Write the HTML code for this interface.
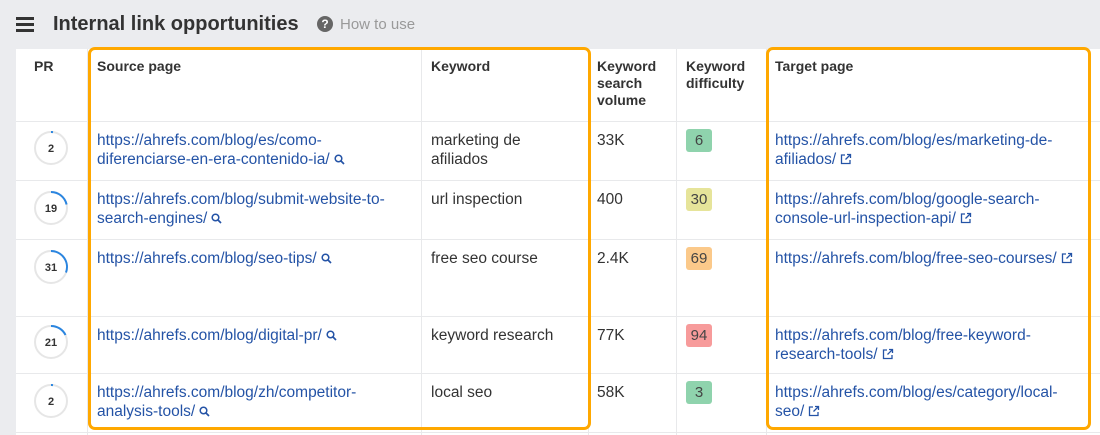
<!DOCTYPE html>
<html><head><meta charset="utf-8"><style>
*{margin:0;padding:0;box-sizing:border-box}
body{width:1100px;height:435px;background:#ebecef;font-family:"Liberation Sans",Arial,sans-serif;position:relative;overflow:hidden;color:#333}
.a{position:absolute}
.t{font-size:15.5px;line-height:19px;white-space:nowrap}
.l{color:#2453a6}
.h{font-size:14px;font-weight:bold;line-height:17px;color:#333}
.vl{position:absolute;width:1px;background:#e8e9eb;top:49px;height:386px}
.hl{position:absolute;height:1px;background:#e8e9eb;left:16px;width:1084px}
.b{position:absolute;left:686px;width:26px;height:23px;border-radius:3px;font-size:15px;line-height:23px;text-align:center;color:#444}
.box{position:absolute;border:3px solid #ffa800;border-radius:7px}
svg.i{vertical-align:-1px;margin-left:4px}
</style></head><body>
<div class="a" style="left:16px;top:17px"><div style="width:18px;height:2.5px;background:#333;margin-bottom:3.5px"></div><div style="width:18px;height:2.5px;background:#333;margin-bottom:3.5px"></div><div style="width:18px;height:2.5px;background:#333"></div></div>
<div class="a" style="left:53px;top:13px;font-size:20px;font-weight:bold;color:#333">Internal link opportunities</div>
<div class="a" style="left:317px;top:16px;width:16px;height:16px;border-radius:50%;background:#666;color:#fff;font-size:12px;font-weight:bold;text-align:center;line-height:16px">?</div>
<div class="a" style="left:340px;top:16px;font-size:15px;color:#999">How to use</div>
<div class="a" style="left:16px;top:49px;width:1084px;height:386px;background:#fff"></div>
<div class="vl" style="left:87px"></div><div class="vl" style="left:421px"></div><div class="vl" style="left:588px"></div><div class="vl" style="left:676px"></div><div class="vl" style="left:766px"></div>
<div class="hl" style="top:121px"></div><div class="hl" style="top:180px"></div><div class="hl" style="top:239px"></div><div class="hl" style="top:316px"></div><div class="hl" style="top:373px"></div><div class="hl" style="top:432px"></div>
<div class="a h" style="left:34px;top:58px">PR</div>
<div class="a h" style="left:97px;top:58px">Source page</div>
<div class="a h" style="left:431px;top:58px">Keyword</div>
<div class="a h" style="left:597px;top:58px">Keyword<br>search<br>volume</div>
<div class="a h" style="left:686px;top:58px">Keyword<br>difficulty</div>
<div class="a h" style="left:775px;top:58px">Target page</div>

<svg class="a" style="left:0;top:0" width="100" height="435">
<g fill="none" stroke-width="2">
<circle cx="51" cy="148" r="16" stroke="#e6e6e6"/><circle cx="51" cy="208" r="16" stroke="#e6e6e6"/><circle cx="51" cy="267" r="16" stroke="#e6e6e6"/><circle cx="51" cy="342" r="16" stroke="#e6e6e6"/><circle cx="51" cy="401" r="16" stroke="#e6e6e6"/>
<path d="M51 132 A16 16 0 0 1 53 132.1" stroke="#2a85e0"/>
<path d="M51 192 A16 16 0 0 1 66.6 204.5" stroke="#2a85e0"/>
<path d="M51 251 A16 16 0 0 1 66 272.5" stroke="#2a85e0"/>
<path d="M51 326 A16 16 0 0 1 65.5 335" stroke="#2a85e0"/>
<path d="M51 385 A16 16 0 0 1 53 385.1" stroke="#2a85e0"/>
</g>
<g font-family="Liberation Sans,Arial" font-size="11" font-weight="bold" fill="#333" text-anchor="middle">
<text x="51" y="152">2</text><text x="51" y="212">19</text><text x="51" y="271">31</text><text x="51" y="346">21</text><text x="51" y="405">2</text></g>
</svg>

<div class="a t l" style="left:97px;top:131px">https://ahrefs.com/blog/es/como-<br>diferenciarse-en-era-contenido-ia/<svg class="i" width="11" height="11" viewBox="0 0 11 11"><circle cx="4.5" cy="4.5" r="3.3" fill="none" stroke="#2453a6" stroke-width="1.5"/><path d="M7 7L10 10" stroke="#2453a6" stroke-width="1.7"/></svg></div>
<div class="a t l" style="left:97px;top:190px">https://ahrefs.com/blog/submit-website-to-<br>search-engines/<svg class="i" width="11" height="11" viewBox="0 0 11 11"><circle cx="4.5" cy="4.5" r="3.3" fill="none" stroke="#2453a6" stroke-width="1.5"/><path d="M7 7L10 10" stroke="#2453a6" stroke-width="1.7"/></svg></div>
<div class="a t l" style="left:97px;top:249px">https://ahrefs.com/blog/seo-tips/<svg class="i" width="11" height="11" viewBox="0 0 11 11"><circle cx="4.5" cy="4.5" r="3.3" fill="none" stroke="#2453a6" stroke-width="1.5"/><path d="M7 7L10 10" stroke="#2453a6" stroke-width="1.7"/></svg></div>
<div class="a t l" style="left:97px;top:326px">https://ahrefs.com/blog/digital-pr/<svg class="i" width="11" height="11" viewBox="0 0 11 11"><circle cx="4.5" cy="4.5" r="3.3" fill="none" stroke="#2453a6" stroke-width="1.5"/><path d="M7 7L10 10" stroke="#2453a6" stroke-width="1.7"/></svg></div>
<div class="a t l" style="left:97px;top:383px">https://ahrefs.com/blog/zh/competitor-<br>analysis-tools/<svg class="i" width="11" height="11" viewBox="0 0 11 11"><circle cx="4.5" cy="4.5" r="3.3" fill="none" stroke="#2453a6" stroke-width="1.5"/><path d="M7 7L10 10" stroke="#2453a6" stroke-width="1.7"/></svg></div>

<div class="a t" style="left:431px;top:131px">marketing de<br>afiliados</div>
<div class="a t" style="left:431px;top:190px">url inspection</div>
<div class="a t" style="left:431px;top:249px">free seo course</div>
<div class="a t" style="left:431px;top:326px">keyword research</div>
<div class="a t" style="left:431px;top:383px">local seo</div>

<div class="a t" style="left:597px;top:131px">33K</div>
<div class="a t" style="left:597px;top:190px">400</div>
<div class="a t" style="left:597px;top:249px">2.4K</div>
<div class="a t" style="left:597px;top:326px">77K</div>
<div class="a t" style="left:597px;top:383px">58K</div>

<div class="b" style="top:129px;background:#8fd3ad">6</div>
<div class="b" style="top:188px;background:#e6e49a">30</div>
<div class="b" style="top:247px;background:#fbc98a">69</div>
<div class="b" style="top:324px;background:#f79b9b">94</div>
<div class="b" style="top:381px;background:#8fd3ad">3</div>

<div class="a t l" style="left:775px;top:131px">https://ahrefs.com/blog/es/marketing-de-<br>afiliados/<svg class="i" width="12" height="12" viewBox="0 0 12 12"><path d="M5 2H1.5V10.5H10V7M7 1.5H10.5V5M10.5 1.5L5.5 6.5" fill="none" stroke="#2453a6" stroke-width="1.3"/></svg></div>
<div class="a t l" style="left:775px;top:190px">https://ahrefs.com/blog/google-search-<br>console-url-inspection-api/<svg class="i" width="12" height="12" viewBox="0 0 12 12"><path d="M5 2H1.5V10.5H10V7M7 1.5H10.5V5M10.5 1.5L5.5 6.5" fill="none" stroke="#2453a6" stroke-width="1.3"/></svg></div>
<div class="a t l" style="left:775px;top:249px">https://ahrefs.com/blog/free-seo-courses/<svg class="i" width="12" height="12" viewBox="0 0 12 12"><path d="M5 2H1.5V10.5H10V7M7 1.5H10.5V5M10.5 1.5L5.5 6.5" fill="none" stroke="#2453a6" stroke-width="1.3"/></svg></div>
<div class="a t l" style="left:775px;top:326px">https://ahrefs.com/blog/free-keyword-<br>research-tools/<svg class="i" width="12" height="12" viewBox="0 0 12 12"><path d="M5 2H1.5V10.5H10V7M7 1.5H10.5V5M10.5 1.5L5.5 6.5" fill="none" stroke="#2453a6" stroke-width="1.3"/></svg></div>
<div class="a t l" style="left:775px;top:383px">https://ahrefs.com/blog/es/category/local-<br>seo/<svg class="i" width="12" height="12" viewBox="0 0 12 12"><path d="M5 2H1.5V10.5H10V7M7 1.5H10.5V5M10.5 1.5L5.5 6.5" fill="none" stroke="#2453a6" stroke-width="1.3"/></svg></div>

<div class="box" style="left:88px;top:47px;width:503px;height:383px"></div>
<div class="box" style="left:766px;top:47px;width:325px;height:383px"></div>
</body></html>
